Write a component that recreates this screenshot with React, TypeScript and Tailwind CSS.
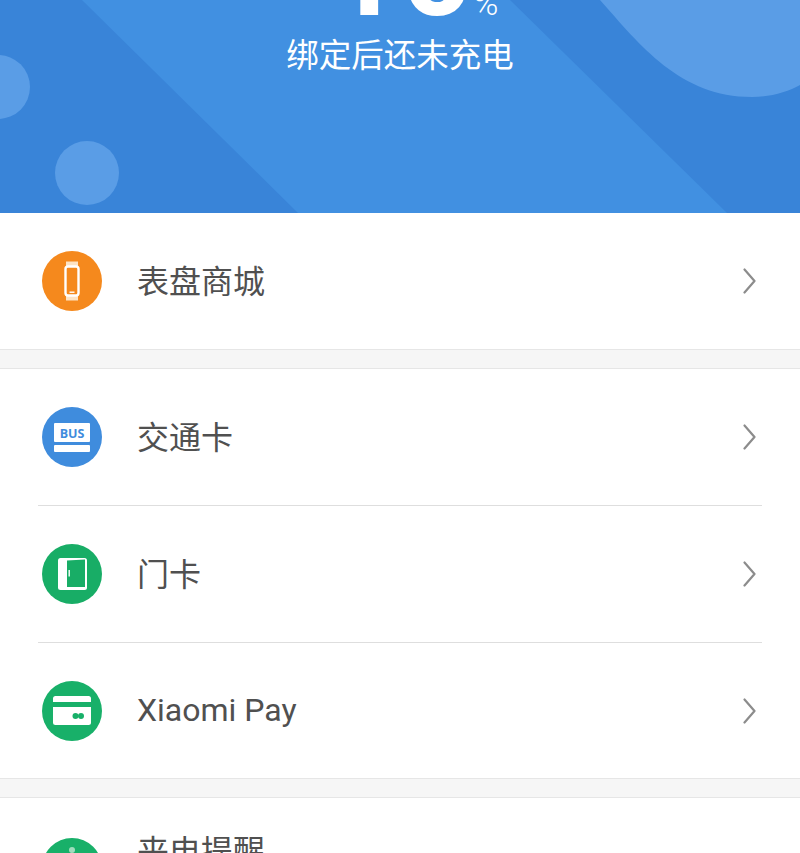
import React from "react";

const cjk = "font-['Noto_Sans_CJK_SC','Noto_Sans',sans-serif]";

function Chevron() {
  return (
    <svg width="14" height="26" viewBox="0 0 14 26" fill="none" className="shrink-0">
      <path d="M2.5 1.5 L12.5 13 L2.5 24.5" stroke="#8c8c8c" strokeWidth="2.2" strokeLinecap="round" strokeLinejoin="round" />
    </svg>
  );
}

function WatchIcon() {
  return (
    <svg width="60" height="60" viewBox="0 0 60 60" className="shrink-0">
      <circle cx="30" cy="30" r="30" fill="#f5891d" />
      <path d="M24 10.5h12v4.5H24zM24 45h12v4.5H24z" fill="#fde3c4" />
      <rect x="23.5" y="15.5" width="13" height="29" rx="2.5" fill="#f5891d" stroke="#fff" strokeWidth="2.4" />
      <rect x="27.5" y="40.5" width="5" height="1.4" fill="#fff" />
    </svg>
  );
}

function BusIcon() {
  return (
    <svg width="60" height="60" viewBox="0 0 60 60" className="shrink-0">
      <circle cx="30" cy="30" r="30" fill="#3f8cdd" />
      <rect x="12" y="16" width="36" height="19" rx="1" fill="#fff" />
      <rect x="12" y="38" width="36" height="7" rx="1" fill="#fff" />
      <text x="30" y="30.5" textAnchor="middle" fontSize="12.5" fontWeight="700" fill="#3f8cdd" fontFamily="'Open Sans',sans-serif">BUS</text>
    </svg>
  );
}

function DoorIcon() {
  return (
    <svg width="60" height="60" viewBox="0 0 60 60" className="shrink-0">
      <circle cx="30" cy="30" r="30" fill="#18ad66" />
      <rect x="16" y="14" width="29" height="32" rx="2.5" fill="#fff" />
      <path d="M25 16.5 L43 15.5 V43 H25 Z" fill="#18ad66" />
      <rect x="26.5" y="26" width="1.4" height="6.5" fill="#fff" />
    </svg>
  );
}

function PayIcon() {
  return (
    <svg width="60" height="60" viewBox="0 0 60 60" className="shrink-0">
      <circle cx="30" cy="30" r="30" fill="#18b069" />
      <rect x="11" y="15" width="38" height="29" rx="2.5" fill="#fff" />
      <rect x="11" y="21" width="38" height="5" fill="#18b069" />
      <circle cx="33.5" cy="35" r="3" fill="#18b069" />
      <circle cx="39" cy="35" r="3" fill="#18b069" />
    </svg>
  );
}

function CallIcon() {
  return (
    <svg width="60" height="60" viewBox="0 0 60 60" className="shrink-0">
      <circle cx="30" cy="30" r="30" fill="#18b069" />
      <circle cx="30" cy="12" r="3" fill="#9fdcbd" />
    </svg>
  );
}

function Row({ icon, label, className = "h-[136px]", labelClass = "mb-[4px]" }: { icon: React.ReactNode; label: string; className?: string; labelClass?: string }) {
  return (
    <div className={`flex shrink-0 items-center pl-[42px] pr-[44px] ${className}`}>
      {icon}
      <span className={`ml-[35px] text-[32px] leading-none font-normal text-[#505050] ${labelClass}`}>{label}</span>
      <div className="ml-auto">
        <Chevron />
      </div>
    </div>
  );
}

function Divider() {
  return <div className="mx-[38px] h-px shrink-0 bg-[#dedede]" />;
}

function Gap() {
  return <div className="h-[20px] shrink-0 border-y border-[#e6e6e6] bg-[#f6f6f6]" />;
}

function Hero() {
  return (
    <div className="relative h-[213px] shrink-0 overflow-hidden bg-[#3984d8]">
      <svg className="absolute inset-0" width="800" height="213" viewBox="0 0 800 213">
        <polygon points="82,0 510,0 727,213 298,213" fill="#4190e1" />
        <path d="M600 0 C640 45 680 97 752 97 C770 97 788 92 800 85 V0 Z" fill="#5a9de6" />
        <circle cx="-2" cy="87" r="32" fill="#5a9de6" />
        <circle cx="87" cy="173" r="32" fill="#5a9de6" />
      </svg>
      <div className="relative flex flex-col items-center text-white">
        <div className="-mt-[78px] flex h-[93px] items-end justify-center pl-[27px]">
          <span className="font-['Roboto',sans-serif] text-[126px] font-bold leading-[126px] mb-[-20px]">10</span>
          <span className="font-['Roboto',sans-serif] text-[34px] font-light leading-none mb-[-5px]">%</span>
        </div>
        <div className={`mt-[20px] text-[32.5px] leading-[36px] font-normal ${cjk}`}>绑定后还未充电</div>
      </div>
    </div>
  );
}

export default function App() {
  return (
    <div className={`flex h-[853px] w-[800px] flex-col overflow-hidden bg-white ${cjk}`}>
      <Hero />
      <Row icon={<WatchIcon />} label="表盘商城" />
      <Gap />
      <Row icon={<BusIcon />} label="交通卡" />
      <Divider />
      <Row icon={<DoorIcon />} label="门卡" />
      <Divider />
      <Row icon={<PayIcon />} label="Xiaomi Pay" className="h-[135px]" labelClass="mb-[1px] font-['Roboto',sans-serif]" />
      <Gap />
      <Row icon={<CallIcon />} label="来电提醒" className="h-[140px]" labelClass="mb-[38px]" />
    </div>
  );
}
